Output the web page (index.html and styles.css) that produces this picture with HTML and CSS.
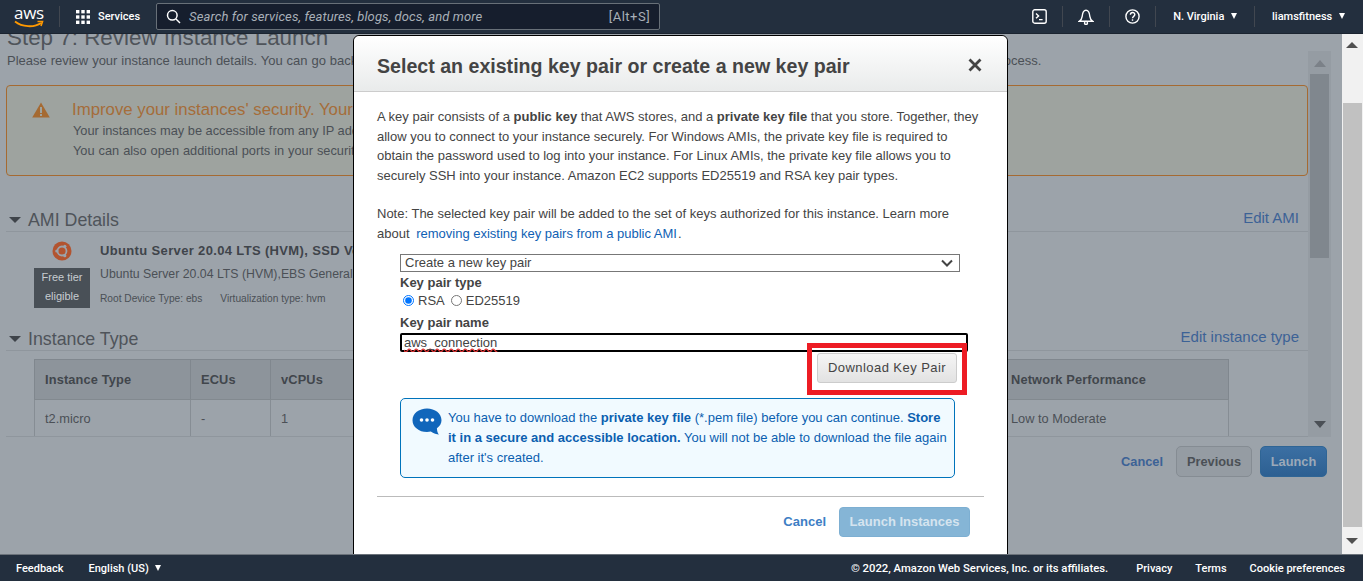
FILE: index.html
```html
<!DOCTYPE html>
<html lang="en">
<head>
  <meta charset="UTF-8" />
  <meta name="viewport" content="width=device-width, initial-scale=1.0" />
  <title>Review Instance Launch</title>
  <link rel="stylesheet" href="styles.css">
</head>
<body>

  <!-- Top Navigation -->
  <header class="topbar">
    <div class="logo">
      <span class="logo-text">aws</span>
      <svg class="logo-smile" width="30" height="9" viewBox="0 0 30 9"><path d="M1 1.5C8 7 20 8 27 3" fill="none" stroke="#ff9900" stroke-width="1.8"/><path d="M23.5 1.5L28.5 1.5L27 6" fill="none" stroke="#ff9900" stroke-width="1.6"/></svg>
    </div>
    <span class="nav-sep sep-logo"></span>
    <svg class="grid-icon" width="14" height="14" viewBox="0 0 14 14" fill="#fff">
      <rect x="0" y="0" width="3.4" height="3.4"/><rect x="5.3" y="0" width="3.4" height="3.4"/><rect x="10.6" y="0" width="3.4" height="3.4"/>
      <rect x="0" y="5.3" width="3.4" height="3.4"/><rect x="5.3" y="5.3" width="3.4" height="3.4"/><rect x="10.6" y="5.3" width="3.4" height="3.4"/>
      <rect x="0" y="10.6" width="3.4" height="3.4"/><rect x="5.3" y="10.6" width="3.4" height="3.4"/><rect x="10.6" y="10.6" width="3.4" height="3.4"/>
    </svg>
    <span class="nav-label services">Services</span>
    <div class="searchbox">
      <svg width="15" height="15" viewBox="0 0 15 15" fill="none" stroke="#fff" stroke-width="1.5"><circle cx="6.3" cy="6.3" r="4.8"/><path d="M10 10l4 4"/></svg>
      <span class="search-text">Search for services, features, blogs, docs, and more</span>
      <span class="search-key">[Alt+S]</span>
    </div>
    <div class="nav-right">
      <svg class="nav-icon" width="15" height="15" viewBox="0 0 15 15" fill="none" stroke="#fff" stroke-width="1.4"><rect x="0.8" y="0.8" width="13.4" height="13.4" rx="2"/><path d="M4 4.5l2.6 2.4L4 9.3M7 10.6h3.6"/></svg>
      <span class="nav-sep"></span>
      <svg class="nav-icon" width="16" height="16" viewBox="0 0 16 16" fill="none" stroke="#fff" stroke-width="1.4"><path d="M1.2 12.300c1.800-1.100 2.700-2.800 3-5C4.500 4 5.800 1.200 8 1.200s3.500 2.800 3.800 6.100c.3 2.200 1.200 3.900 3 5z"/><circle cx="8" cy="13.900" r="1.500"/></svg>
      <span class="nav-sep"></span>
      <svg class="nav-icon" width="15" height="15" viewBox="0 0 15 15" fill="none" stroke="#fff" stroke-width="1.4"><circle cx="7.500" cy="7.500" r="6.600"/><path d="M5.400 5.800c0-3 4.400-2.900 4.400-.2 0 1.800-2.300 1.800-2.300 3.700"/><path d="M7.500 10.300v1.500"/></svg>
      <span class="nav-sep"></span>
      <span class="nav-label region">N. Virginia <i class="caret"></i></span>
      <span class="nav-sep"></span>
      <span class="nav-label account">liamsfitness <i class="caret"></i></span>
    </div>
  </header>

  <div class="viewport">
    <main class="page">
      <div class="page-inner">
        <h1 class="page-title">Step 7: Review Instance Launch</h1>
        <p class="page-sub">Please review your instance launch details. You can go back to edit changes for each section. Click Launch to assign a key pair to your instance and complete the launch process.</p>

        <!-- Warning -->
        <div class="warning">
          <svg class="warn-icon" width="18" height="16" viewBox="0 0 18 16"><path d="M9 0.500L17.800 15.500H0.200z" fill="#a56a32"/><rect x="8" y="5" width="2" height="6" fill="#9ea39f"/><rect x="8" y="12" width="2" height="2" fill="#9ea39f"/></svg>
          <div class="warn-body">
            <div class="warn-title">Improve your instances' security. Your security group, launch-wizard-1, is open to the world.</div>
            <div class="warn-line">Your instances may be accessible from any IP address. We recommend that you update your security group rules to allow access from known IP addresses only.</div>
            <div class="warn-line warn-last">You can also open additional ports in your security group to facilitate access to the application or service you're running. <a class="link">Edit security groups</a></div>
          </div>
        </div>

        <div class="content-row">
          <div class="sections">
            <!-- AMI Details -->
            <div class="section-head ami-head">
              <h2><i class="tri"></i>AMI Details</h2>
              <a class="link edit-link">Edit AMI</a>
            </div>
            <div class="ami">
              <div class="ami-side">
                <svg width="20" height="20" viewBox="0 0 20 20"><circle cx="10" cy="10" r="9.500" fill="#b25430"/><circle cx="10" cy="10" r="4.500" fill="none" stroke="#9ca3aa" stroke-width="1.800"/><circle cx="4.800" cy="10" r="1.600" fill="#9ca3aa"/><circle cx="12.800" cy="5.300" r="1.600" fill="#9ca3aa"/><circle cx="12.800" cy="14.700" r="1.600" fill="#9ca3aa"/></svg>
                <div class="badge">Free tier<br>eligible</div>
              </div>
              <div class="ami-info">
                <div class="ami-title">Ubuntu Server 20.04 LTS (HVM), SSD Volume Type</div>
                <div class="ami-desc">Ubuntu Server 20.04 LTS (HVM),EBS General Purpose (SSD) Volume Type.</div>
                <div class="ami-meta"><span>Root Device Type: ebs</span><span>Virtualization type: hvm</span></div>
              </div>
            </div>

            <!-- Instance Type -->
            <div class="section-head type-head">
              <h2><i class="tri"></i>Instance Type</h2>
              <a class="link edit-link">Edit instance type</a>
            </div>
            <table class="itable">
              <colgroup>
                <col class="c1"><col class="c2"><col class="c3"><col class="c4"><col class="c5"><col class="c6"><col class="c7">
              </colgroup>
              <tr><th>Instance Type</th><th>ECUs</th><th>vCPUs</th><th>Memory (GiB)</th><th>Instance Storage (GB)</th><th>EBS-Optimized Available</th><th>Network Performance</th></tr>
              <tr><td>t2.micro</td><td>-</td><td>1</td><td>1</td><td>EBS only</td><td>-</td><td>Low to Moderate</td></tr>
            </table>
          </div>
          <div class="inner-scroll">
            <i class="arrow-up"></i>
            <div class="inner-thumb"></div>
            <i class="arrow-down"></i>
          </div>
        </div>

        <div class="page-actions">
          <a class="link cancel-link">Cancel</a>
          <button class="btn-prev">Previous</button>
          <button class="btn-launch">Launch</button>
        </div>
      </div>

      <!-- Key Pair Modal -->
      <section class="modal">
        <div class="modal-head">
          <h3>Select an existing key pair or create a new key pair</h3>
          <svg class="modal-close" width="14" height="14" viewBox="0 0 14 14" stroke="#444" stroke-width="2.800"><path d="M1.500 1.500l11 11M12.500 1.500l-11 11"/></svg>
        </div>
        <div class="modal-body">
          <p class="intro">A key pair consists of a <b>public key</b> that AWS stores, and a <b>private key file</b> that you store. Together, they allow you to connect to your instance securely. For Windows AMIs, the private key file is required to obtain the password used to log into your instance. For Linux AMIs, the private key file allows you to securely SSH into your instance. Amazon EC2 supports ED25519 and RSA key pair types.</p>
          <p class="note">Note: The selected key pair will be added to the set of keys authorized for this instance. Learn more about <a class="modal-link">removing existing key pairs from a public AMI</a>.</p>

          <div class="keyform">
            <select class="key-select"><option>Create a new key pair</option></select>
            <label class="field-label">Key pair type</label>
            <div class="radios">
              <input type="radio" name="kind" checked><span>RSA</span>
              <input type="radio" name="kind"><span>ED25519</span>
            </div>
            <label class="field-label name-label">Key pair name</label>
            <input class="key-name" type="text" value="aws_connection">
            <div class="download-row">
              <button class="btn-download">Download Key Pair</button>
              <span class="red-box"></span>
            </div>
            <div class="info">
              <svg class="info-icon" width="30" height="27" viewBox="0 0 30 27"><path d="M15 0.500C6.900 0.500 0.500 5.600 0.500 12.200S6.900 24 15 24c1.300 0 2.600-.1 3.800-.4 2.500 1.800 6.200 3 8.200 3-1.300-1.400-2-3.700-2.100-6.400 2.900-2 4.600-4.800 4.600-8C29.500 5.600 23.100 0.500 15 0.500z" fill="#1166bb"/><circle cx="9.500" cy="12" r="1.800" fill="#fff"/><circle cx="15" cy="12" r="1.800" fill="#fff"/><circle cx="20.500" cy="12" r="1.800" fill="#fff"/></svg>
              <p>You have to download the <b>private key file</b> (*.pem file) before you can continue. <b>Store it in a secure and accessible location.</b> You will not be able to download the file again after it's created.</p>
            </div>
          </div>
        </div>
        <div class="modal-foot">
          <a class="modal-link foot-cancel">Cancel</a>
          <button class="btn-instances">Launch Instances</button>
        </div>
      </section>
    </main>

    <!-- Browser Scrollbar -->
    <div class="page-scroll">
      <i class="arrow-up"></i>
      <div class="page-thumb"></div>
      <i class="arrow-down"></i>
    </div>
  </div>

  <!-- Footer -->
  <footer class="footer">
    <span class="foot-feedback">Feedback</span>
    <span class="foot-lang">English (US) <i class="caret"></i></span>
    <span class="foot-copy">© 2022, Amazon Web Services, Inc. or its affiliates.</span>
    <span class="foot-privacy">Privacy</span>
    <span class="foot-terms">Terms</span>
    <span class="foot-cookie">Cookie preferences</span>
  </footer>

</body>
</html>
```

FILE: styles.css
```css
/* Global Styles */
html, body {
  margin: 0;
  padding: 0;
  height: 100%;
  overflow: hidden;
}

body {
  display: flex;
  flex-direction: column;
  font-family: 'Liberation Sans', Arial, sans-serif;
  font-size: 12.8px;
  background-color: #9ca3aa;
  color: #4b5056;
}

i {
  display: inline-block;
}

/* Top Navigation */
.topbar {
  flex: none;
  height: 34px;
  box-sizing: border-box;
  display: flex;
  align-items: center;
  background-color: #232f3e;
  border-bottom: 1px solid #1b2430;
  color: #fff;
  font-family: 'Roboto', sans-serif;
  position: relative;
  z-index: 3;
}

.logo {
  width: 30px;
  margin-left: 14px;
  position: relative;
  height: 26px;
}

.logo-text {
  display: block;
  font-family: 'Open Sans', sans-serif;
  font-size: 17px;
  line-height: 17px;
  text-align: center;
  letter-spacing: -0.3px;
}

.logo-smile {
  position: absolute;
  left: 0;
  top: 16px;
}

.nav-sep {
  width: 1px;
  height: 21px;
  background-color: #414750;
}

.sep-logo {
  margin-left: 15px;
}

.grid-icon {
  margin-left: 16px;
}

.nav-label {
  font-size: 11px;
  font-weight: 500;
  white-space: nowrap;
}

.services {
  margin-left: 8px;
}

.searchbox {
  width: 504px;
  height: 27px;
  box-sizing: border-box;
  margin-left: 16px;
  padding: 0 9px 0 9px;
  display: flex;
  align-items: center;
  background-color: #161e2d;
  border: 1px solid #687078;
  border-radius: 2px;
}

.search-text {
  flex: 1;
  margin-left: 8px;
  font-size: 13px;
  font-style: italic;
  color: #a9b0b8;
  letter-spacing: 0.1px;
}

.search-key {
  color: #a9b0b8;
  font-size: 13px;
  letter-spacing: 0.5px;
}

.nav-right {
  margin-left: auto;
  display: flex;
  align-items: center;
  padding-right: 18px;
}

.nav-right .nav-icon:nth-child(1) {
  margin-right: 15px;
}

.nav-right .nav-icon:nth-child(3) {
  margin: 0 15px;
}

.nav-right .nav-icon:nth-child(5) {
  margin: 0 15px;
}

.region {
  margin: 0 17px;
}

.account {
  margin-left: 17px;
}

.caret {
  width: 0;
  height: 0;
  margin-left: 4px;
  vertical-align: 1px;
  border-left: 3.5px solid transparent;
  border-right: 3.5px solid transparent;
  border-top: 6px solid #fff;
}

/* Layout */
.viewport {
  flex: 1;
  display: flex;
  min-height: 0;
}

.page {
  flex: 1;
  min-width: 0;
  position: relative;
  overflow: hidden;
}

.page-inner {
  padding: 0 34px 0 6px;
}

.link {
  color: #3c6296;
}

/* Title */
.page-title {
  margin: -9px 0 0 1px;
  font-size: 22.4px;
  line-height: 26px;
  font-weight: normal;
  color: #4f545a;
}

.page-sub {
  margin: 2px 0 0 1px;
  font-size: 13px;
  word-spacing: 0.3px;
  line-height: 16px;
  white-space: nowrap;
}

/* Warning */
.warning {
  height: 91px;
  box-sizing: border-box;
  margin-top: 16px;
  display: flex;
  background-color: #9ea39f;
  border: 1px solid #a56a32;
  border-radius: 4px;
  padding: 0 0 0 25px;
}

.warn-icon {
  margin-top: 16px;
  flex: none;
}

.warn-body {
  margin-left: 22px;
  padding-top: 14px;
}

.warn-title {
  font-size: 16.8px;
  line-height: 20px;
  color: #a56d3a;
  white-space: nowrap;
}

.warn-line {
  margin: 2px 0 0 1px;
  line-height: 17px;
  white-space: nowrap;
}

.warn-last {
  margin-top: 3px;
  word-spacing: 0.4px;
}

/* Sections */
.content-row {
  display: flex;
  margin-right: -23px;
}

.sections {
  flex: 1;
  min-width: 0;
  border-bottom: 1px solid #8f969d;
}

.inner-scroll {
  flex: none;
  width: 23px;
  margin-top: -125px;
  background-color: #959ca3;
  display: flex;
  flex-direction: column;
  align-items: center;
  justify-content: space-between;
  position: relative;
}

.inner-thumb {
  position: absolute;
  top: 23px;
  left: 2px;
  right: 2px;
  height: 184px;
  background-color: #80878e;
}

.arrow-up,
.arrow-down {
  width: 0;
  height: 0;
  border-left: 6px solid transparent;
  border-right: 6px solid transparent;
}

.inner-scroll .arrow-up {
  margin-top: 9px;
  border-bottom: 7px solid #7b8188;
}

.inner-scroll .arrow-down {
  margin-bottom: 9px;
  border-top: 7px solid #4b5056;
}

.section-head {
  display: flex;
  justify-content: space-between;
  align-items: flex-end;
  border-bottom: 1px solid #8f969d;
  padding-right: 9px;
}

.section-head h2 {
  margin: 0;
  font-size: 17.8px;
  font-weight: normal;
  line-height: 22px;
  color: #4f545a;
}

.tri {
  width: 0;
  height: 0;
  margin: 0 7px 3px 3px;
  border-left: 6px solid transparent;
  border-right: 6px solid transparent;
  border-top: 6px solid #3f444a;
}

.ami-head {
  margin-top: 33px;
  height: 22px;
}

.edit-link {
  font-size: 15px;
  line-height: 22px;
  padding-bottom: 2px;
}

.ami {
  display: flex;
  height: 95px;
}

.ami-side {
  width: 56px;
  margin-left: 28px;
  padding-top: 9px;
  display: flex;
  flex-direction: column;
  align-items: center;
}

.badge {
  width: 56px;
  height: 40px;
  margin-top: 7px;
  background-color: #495057;
  color: #c7ccd1;
  font-size: 11px;
  line-height: 19px;
  text-align: center;
}

.ami-info {
  margin-left: 10px;
  padding-top: 11px;
}

.ami-title {
  font-size: 13px;
  line-height: 16px;
  font-weight: bold;
  letter-spacing: 0.35px;
  color: #3f444a;
  white-space: nowrap;
}

.ami-desc {
  margin-top: 7px;
  font-size: 12.3px;
  line-height: 16px;
  white-space: nowrap;
}

.ami-meta {
  margin-top: 10px;
  font-size: 10.2px;
  line-height: 14px;
}

.ami-meta span {
  margin-right: 18px;
}

.type-head {
  height: 23px;
}

.itable {
  width: 1194px;
  margin: 8px 0 0 28px;
  table-layout: fixed;
  border-collapse: collapse;
}

.c1 { width: 156px; }
.c2 { width: 80px; }
.c3 { width: 120px; }
.c4 { width: 160px; }
.c5 { width: 240px; }
.c6 { width: 210px; }
.c7 { width: 228px; }

.itable th {
  height: 39px;
  padding: 0 10px;
  text-align: left;
  background-color: #8d949b;
  color: #41464c;
  border: 1px solid #80878e;
  border-bottom-color: #82898f;
  white-space: nowrap;
  letter-spacing: 0.15px;
}

.itable td {
  height: 36px;
  padding: 0 10px;
  border-left: 1px solid #868d94;
  border-right: 1px solid #868d94;
}

/* Page Actions */
.page-actions {
  margin: 9px -19px 0 0;
  height: 31px;
  display: flex;
  justify-content: flex-end;
  align-items: center;
}

.cancel-link {
  font-weight: bold;
  margin-right: 13px;
}

.page-actions button {
  height: 31px;
  font-family: inherit;
  font-size: 12.8px;
  font-weight: bold;
  border-radius: 5px;
  padding: 0;
}

.btn-prev {
  width: 76px;
  margin-right: 8px;
  background-color: #959ca3;
  border: 1px solid #858c93;
  color: #4b5056;
}

.btn-launch {
  width: 67px;
  background: linear-gradient(#3b6fa3, #2d6092);
  border: 1px solid #2f6595;
  color: #9ca9b8;
}

/* Modal */
.modal {
  position: absolute;
  left: 353px;
  top: 1px;
  width: 655px;
  height: 530px;
  box-sizing: border-box;
  background-color: #fff;
  border: 1px solid #000;
  border-radius: 6px 6px 0 0;
  color: #444;
  font-size: 13px;
}

.modal-head {
  height: 56px;
  box-sizing: border-box;
  display: flex;
  align-items: center;
  justify-content: space-between;
  padding: 6px 25px 0 23px;
  background: linear-gradient(#fff, #e9ebeb);
  border-bottom: 1px solid #ccc;
  border-radius: 6px 6px 0 0;
}

.modal-head h3 {
  margin: 0;
  font-size: 19.6px;
  font-weight: bold;
  color: #444;
}

.modal-close {
  margin-top: -4px;
}

.modal-body {
  padding: 15px 23px 0;
}

.intro,
.note {
  margin: 0;
  line-height: 19.600px;
}

.note {
  margin-top: 19px;
}

.modal-link {
  color: #0f5fb4;
}

.note .modal-link {
  margin: 0 1px 0 3px;
}

.keyform {
  margin: 10px 0 0 23px;
}

.key-select {
  display: block;
  width: 560px;
  height: 18px;
  padding: 0 0 0 4px;
  font-family: inherit;
  font-size: 13px;
  color: #444;
  appearance: none;
  background: #fff url("data:image/svg+xml,%3Csvg xmlns='http://www.w3.org/2000/svg' width='12' height='8'%3E%3Cpath d='M1 1.500l5 5 5-5' fill='none' stroke='%23444' stroke-width='2'/%3E%3C/svg%3E") no-repeat right 6px center;
  border: 1px solid #777;
  border-radius: 0;
}

.field-label {
  display: block;
  margin-top: 3px;
  font-weight: bold;
  line-height: 16px;
}

.radios {
  display: flex;
  align-items: center;
  height: 16px;
  margin-top: 2px;
}

.radios input {
  width: 11px;
  height: 11px;
  margin: 0 4px 0 3px;
}

.radios span {
  margin-right: 3px;
}

.name-label {
  margin-top: 6px;
}

/* box-shadow instead of border so the wavy underline is not clipped */
.key-name {
  display: block;
  width: 568px;
  height: 19px;
  box-sizing: border-box;
  padding: 0 4px;
  margin-top: 2px;
  font-family: inherit;
  font-size: 13px;
  line-height: 19px;
  color: #444;
  border: 0;
  box-shadow: inset 0 0 0 2px #000;
  border-radius: 2px;
  outline: none;
  text-decoration: underline wavy #d33;
}

.download-row {
  position: relative;
  height: 46px;
  display: flex;
  justify-content: flex-end;
  padding-right: 27px;
}

.btn-download {
  width: 140px;
  height: 30px;
  margin-top: 1px;
  padding: 0;
  font-family: inherit;
  font-size: 13px;
  letter-spacing: 0.45px;
  color: #444;
  background: linear-gradient(#f5f5f5, #e2e2e2);
  border: 1px solid #ccc;
  border-radius: 3px;
}

/* Annotation drawn over the screenshot */
.red-box {
  position: absolute;
  left: 407px;
  top: -9px;
  width: 160px;
  height: 52px;
  box-sizing: border-box;
  border: 5px solid #ed1c24;
}

.info {
  width: 555px;
  height: 80px;
  box-sizing: border-box;
  display: flex;
  padding: 9px 4px 0 11px;
  background-color: #f1faff;
  border: 1px solid #0073bb;
  border-radius: 5px;
}

.info-icon {
  flex: none;
}

.info p {
  margin: 0 0 0 6px;
  line-height: 20px;
  color: #0b5fb0;
}

.modal-foot {
  margin: 18px 23px 0;
  padding-top: 10px;
  border-top: 1px solid #bbb;
  display: flex;
  justify-content: flex-end;
  align-items: center;
}

.foot-cancel {
  margin-right: 13px;
  font-weight: bold;
  color: #3d7ec4;
}

.btn-instances {
  width: 131px;
  height: 30px;
  margin-right: 14px;
  padding: 0;
  font-family: inherit;
  font-size: 13px;
  font-weight: bold;
  color: #d5e4ef;
  background-color: #85b5d6;
  border: 1px solid #7dafd2;
  border-radius: 4px;
}

/* Browser Scrollbar */
.page-scroll {
  flex: none;
  width: 21px;
  position: relative;
  background-color: #f1f1f1;
}

.page-scroll .arrow-up {
  position: absolute;
  left: 4px;
  top: 8px;
  border-bottom: 6px solid #505050;
}

.page-scroll .arrow-down {
  position: absolute;
  left: 4px;
  bottom: 10px;
  border-top: 6px solid #505050;
}

.page-thumb {
  position: absolute;
  left: 1px;
  right: 1px;
  top: 69px;
  bottom: 27px;
  background-color: #c1c1c1;
}

/* Footer */
.footer {
  flex: none;
  height: 27px;
  display: flex;
  align-items: center;
  background-color: #232f3e;
  border-top: 1px solid #6b727a;
  box-sizing: border-box;
  color: #fff;
  font-family: 'Roboto', sans-serif;
  font-size: 11px;
  font-weight: 500;
  position: relative;
  z-index: 3;
}

.foot-feedback {
  margin-left: 16px;
}

.foot-lang {
  margin-left: 25px;
}

.foot-copy {
  margin-left: auto;
  font-size: 11.3px;
}

.foot-privacy {
  margin-left: 28px;
}

.foot-terms {
  margin-left: 23px;
}

.foot-cookie {
  margin: 0 18px 0 23px;
}
```
